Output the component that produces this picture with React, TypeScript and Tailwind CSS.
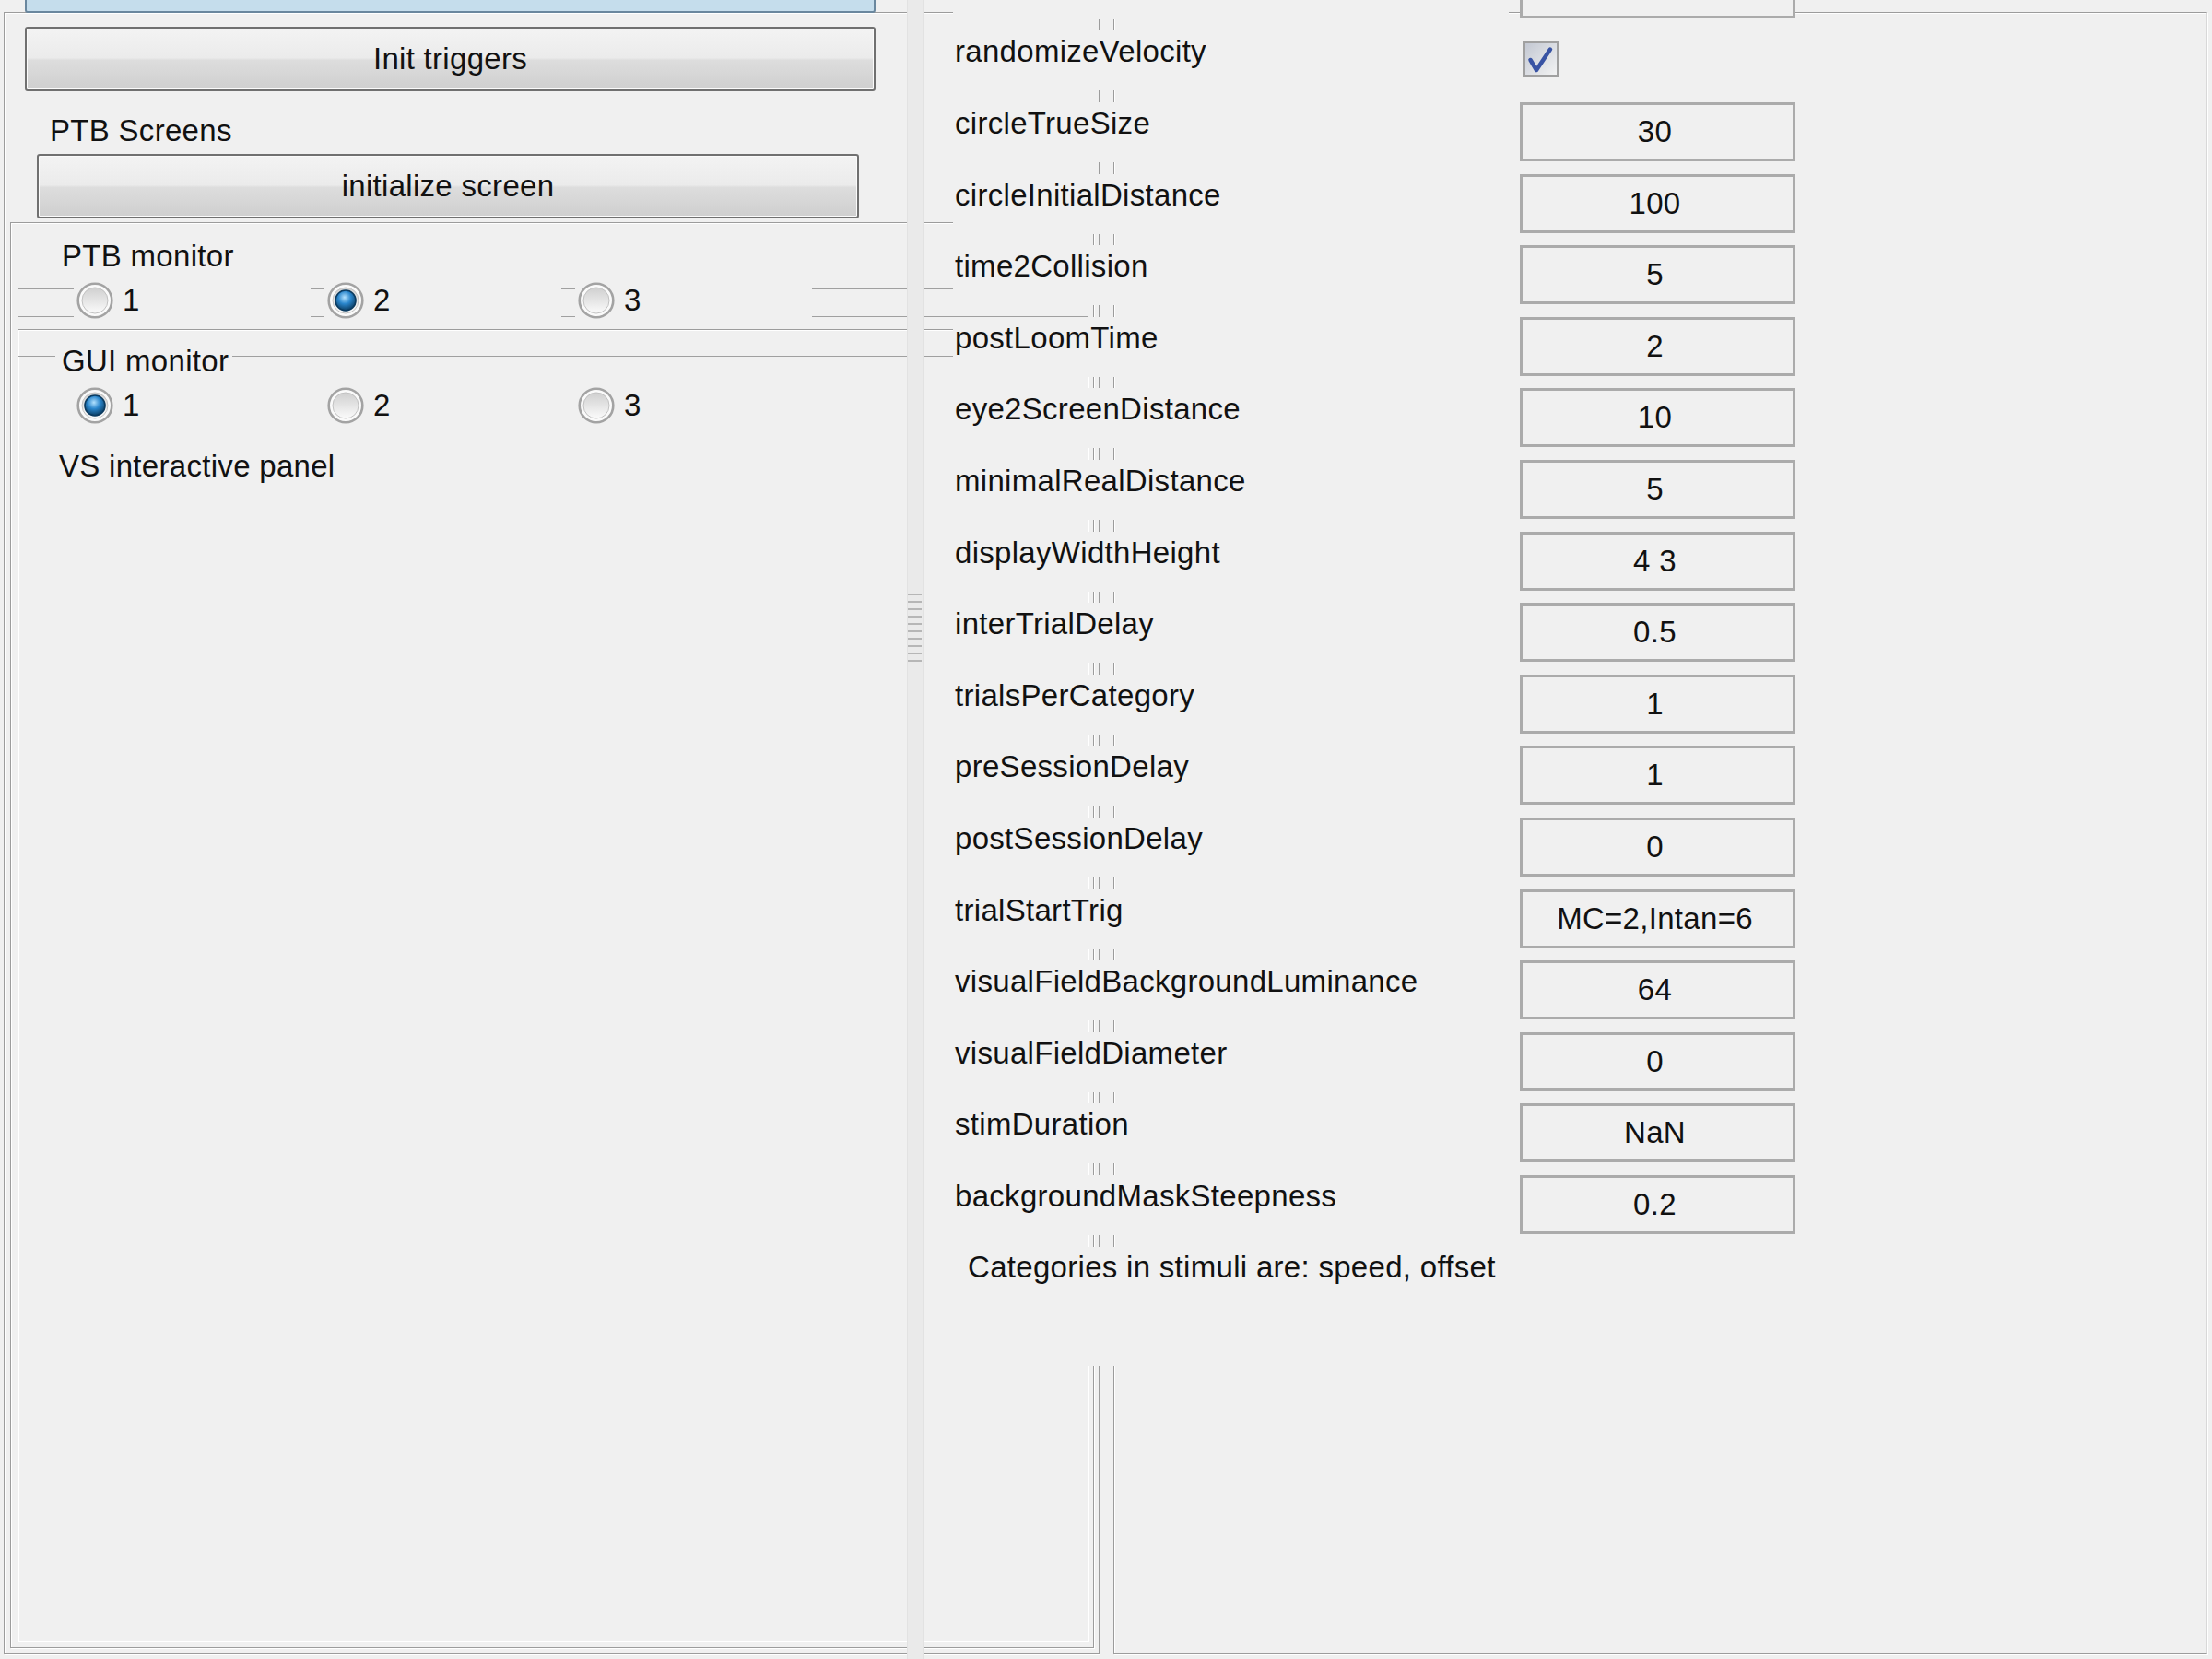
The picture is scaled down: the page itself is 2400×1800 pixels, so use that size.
import React from "react";

const etched = "border border-[#9c9c9c] shadow-[inset_1px_1px_0_#ffffff,1px_1px_0_#ffffff]";
const btn =
  "flex items-center justify-center rounded-[3px] border-2 border-[#707070] shadow-[inset_0_0_0_1px_#fbfbfb] bg-[linear-gradient(to_bottom,#f3f3f3,#ebebeb_48%,#dddddd_52%,#cfcfcf)] leading-[38px]";

function Radio({ on }: { on?: boolean }) {
  return (
    <svg width="40" height="40" viewBox="0 0 40 40" className="shrink-0">
      <defs>
        <linearGradient id="rgbg" x1="0" y1="0" x2="0" y2="1">
          <stop offset="0" stopColor="#cfcfcf" />
          <stop offset="1" stopColor="#fbfbfb" />
        </linearGradient>
        <radialGradient id="rgsel" cx="0.45" cy="0.35" r="0.7">
          <stop offset="0" stopColor="#b3e2ff" />
          <stop offset="0.45" stopColor="#2a86cc" />
          <stop offset="1" stopColor="#073252" />
        </radialGradient>
      </defs>
      <circle cx="20" cy="20" r="18.3" fill="#fafafa" stroke="#a3a3a3" strokeWidth="2.6" />
      <circle cx="20" cy="20" r="14" fill="url(#rgbg)" stroke="#c2c2c2" strokeWidth="1" />
      {on && <circle cx="20" cy="20" r="11" fill="url(#rgsel)" stroke="#0b3b60" strokeWidth="1.6" />}
    </svg>
  );
}

function CheckBox() {
  return (
    <svg width="40" height="40" viewBox="0 0 40 40" className="shrink-0">
      <defs>
        <linearGradient id="cbbg" x1="0" y1="0" x2="1" y2="1">
          <stop offset="0" stopColor="#c1c6d1" />
          <stop offset="1" stopColor="#f4f4f4" />
        </linearGradient>
      </defs>
      <rect x="1.5" y="1.5" width="37" height="37" fill="url(#cbbg)" stroke="#a0a0a0" strokeWidth="3" />
      <path d="M8.5 21 L15 32 L30 9.5" fill="none" stroke="#3853a4" strokeWidth="4.5" strokeLinecap="round" strokeLinejoin="round" />
    </svg>
  );
}

function RadioItem({ n, on }: { n: string; on?: boolean }) {
  return (
    <div className="w-[257px] h-[40px] bg-[#f0f0f0] flex items-center shrink-0">
      <div className="ml-[3px] flex">
        <Radio on={on} />
      </div>
      <span className="ml-[10px] leading-[38px]">{n}</span>
    </div>
  );
}

type Row = { label: string; value?: string; check?: boolean };

const rows: Row[] = [
  { label: "", value: "" },
  { label: "randomizeVelocity", check: true },
  { label: "circleTrueSize", value: "30" },
  { label: "circleInitialDistance", value: "100" },
  { label: "time2Collision", value: "5" },
  { label: "postLoomTime", value: "2" },
  { label: "eye2ScreenDistance", value: "10" },
  { label: "minimalRealDistance", value: "5" },
  { label: "displayWidthHeight", value: "4 3" },
  { label: "interTrialDelay", value: "0.5" },
  { label: "trialsPerCategory", value: "1" },
  { label: "preSessionDelay", value: "1" },
  { label: "postSessionDelay", value: "0" },
  { label: "trialStartTrig", value: "MC=2,Intan=6" },
  { label: "visualFieldBackgroundLuminance", value: "64" },
  { label: "visualFieldDiameter", value: "0" },
  { label: "stimDuration", value: "NaN" },
  { label: "backgroundMaskSteepness", value: "0.2" },
];

export default function App() {
  return (
    <div className="w-[2400px] h-[1800px] bg-[#f0f0f0] overflow-hidden flex items-start pt-[13px] font-['Liberation_Sans',Arial,sans-serif] text-[33px] tracking-[0.3px] text-[#111]">
      {/* Left frame */}
      <div className={`ml-[4px] w-[1189px] h-[1782px] shrink-0 ${etched}`}>
        <div className="-mt-[41px] ml-[22px] w-[923px] h-[41px] rounded-[3px] border-2 border-[#6a879e] bg-[#c5ddec]" />
        <div className={`mt-[15px] ml-[22px] w-[923px] h-[70px] ${btn}`}>Init triggers</div>
        <div className="mt-[24px] ml-[49px] leading-[38px]">PTB Screens</div>
        <div className={`mt-[6px] ml-[35px] w-[892px] h-[70px] ${btn}`}>initialize screen</div>

        <div className={`mt-[4px] ml-[6px] w-[1176px] h-[1547px] ${etched}`}>
          <div className="mt-[17px] ml-[55px] leading-[38px]">PTB monitor</div>
          <div className="mt-[16px] ml-[7px] w-[1162px] h-[31px] border border-[#a0a0a0] flex items-start pl-[60px] gap-[15px]">
            <div className="-mt-[8px] flex gap-[15px]">
              <RadioItem n="1" />
              <RadioItem n="2" on />
              <RadioItem n="3" />
            </div>
          </div>

          <div className={`mt-[13px] ml-[7px] w-[1162px] h-[1424px] ${etched}`}>
            <div className="mt-[28px] h-[17px] border-y border-[#a0a0a0] flex items-start">
              <div className="-mt-[14px] ml-[40px] pl-[7px] pr-[4px] bg-[#f0f0f0] leading-[38px]">GUI monitor</div>
            </div>
            <div className="mt-[17px] h-[40px] flex pl-[60px] gap-[15px]">
              <RadioItem n="1" on />
              <RadioItem n="2" />
              <RadioItem n="3" />
            </div>
            <div className="mt-[27px] ml-[44px] leading-[38px]">VS interactive panel</div>
          </div>
        </div>
      </div>

      {/* Right frame */}
      <div className="ml-[15px] w-[1187px] h-[1782px] shrink-0 border border-[#9c9c9c] border-r-[#d8d8d8] shadow-[inset_1px_1px_0_#ffffff,1px_1px_0_#ffffff]">
        <div className="-ml-[225px] w-[1410px] flex items-start">
          {/* splitter */}
          <div className="-mt-[14px] w-[18px] h-[1800px] shrink-0 bg-[#eaeaea] border-x border-[#e2e2e2] pt-[644px] flex flex-col gap-[6px]">
            {Array.from({ length: 10 }).map((_, i) => (
              <div key={i} className="w-[15px] h-[2px] bg-[#b6b6b6]" />
            ))}
          </div>

          {/* rows */}
          <div className="-mt-[58.2px] pl-[32px] flex flex-col gap-[12.6px]">
            {rows.map((r, i) => (
              <div key={i} className="flex h-[65px] shrink-0">
                <div className="w-[603px] h-[65px] bg-[#f0f0f0] pl-[2px] pt-[4px] leading-[38px] whitespace-nowrap">
                  {r.label}
                </div>
                {r.check ? (
                  <div className="ml-[15px] mt-[11px] flex">
                    <CheckBox />
                  </div>
                ) : (
                  <div className="ml-[12px] w-[299px] h-[64px] border-[3px] border-[#ababab] bg-[#f0f0f0] flex items-center justify-center pr-[6px] leading-[38px] whitespace-nowrap">
                    {r.value}
                  </div>
                )}
              </div>
            ))}
            <div className="w-[603px] h-[129px] bg-[#f0f0f0] pl-[16px] pt-[3px] leading-[38px] whitespace-nowrap">
              Categories in stimuli are: speed, offset
            </div>
          </div>
        </div>
      </div>
    </div>
  );
}
